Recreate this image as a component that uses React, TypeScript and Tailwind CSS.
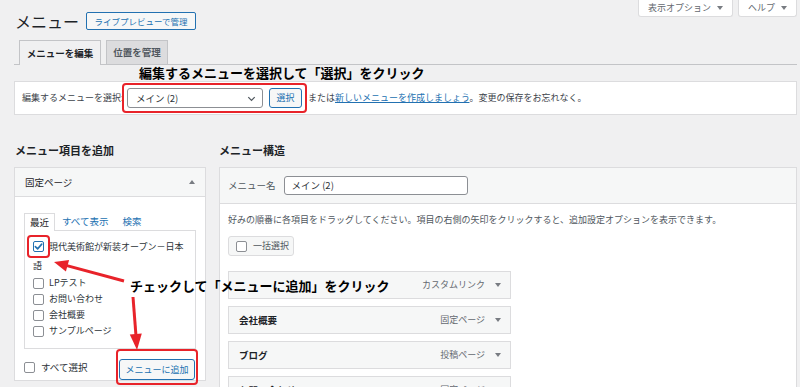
import React from "react";

const RED = "#e8232a";

function Check({ checked = false }: { checked?: boolean }) {
  return (
    <span
      className={
        "inline-flex items-center justify-center w-[11px] h-[11px] rounded-[2px] border bg-white shrink-0 align-middle " +
        (checked ? "border-[#2271b1]" : "border-[#8c8f94]")
      }
    >
      {checked && (
        <svg width="9" height="9" viewBox="0 0 10 10">
          <path d="M1.5 5.2 L4 7.6 L8.6 2.4" fill="none" stroke="#2271b1" strokeWidth="1.8" strokeLinecap="round" strokeLinejoin="round" />
        </svg>
      )}
    </span>
  );
}

function Tri({ up = false }: { up?: boolean }) {
  return (
    <svg width="6" height="4" viewBox="0 0 6 4" className="shrink-0">
      {up ? <path d="M0 4 L3 0 L6 4 Z" fill="#787c82" /> : <path d="M0 0 L6 0 L3 4 Z" fill="#787c82" />}
    </svg>
  );
}

function MenuItem({ title, type }: { title: string; type: string }) {
  return (
    <div className="h-[28px] border border-[#dcdcde] bg-[#f6f7f7] flex items-center pl-[10px] pr-[9px]">
      <span className="text-[9.5px] font-bold text-[#1d2327] flex-1">{title}</span>
      <span className="text-[9px] text-[#646970] mr-[10px]">{type}</span>
      <Tri />
    </div>
  );
}

export default function App() {
  return (
    <div
      className="relative w-[800px] h-[387px] overflow-hidden bg-[#f0f0f1] text-[#3c434a]"
      style={{ fontFamily: '"Noto Sans CJK JP", "Noto Sans", sans-serif' }}
    >
      {/* header row */}
      <div className="flex justify-between pl-[15px] pr-[3px]">
        <div className="flex items-center gap-[7px] pt-[11px]">
          <h1 className="text-[16px] leading-[20px] font-normal text-[#1d2327]">メニュー</h1>
          <button className="h-[18px] w-[110px] border border-[#2271b1] rounded-[2px] bg-[#f6f7f7] text-[#2271b1] text-[8.5px] leading-none">
            ライブプレビューで管理
          </button>
        </div>
        <div className="flex gap-[5px]">
          <button className="h-[17px] w-[95px] bg-white border border-t-0 border-[#dcdcde] rounded-b-[3px] flex items-center justify-center gap-[6px] text-[9px] text-[#646970]">
            表示オプション <Tri />
          </button>
          <button className="h-[17px] w-[59px] bg-white border border-t-0 border-[#dcdcde] rounded-b-[3px] flex items-center justify-center gap-[6px] text-[9px] text-[#646970]">
            ヘルプ <Tri />
          </button>
        </div>
      </div>

      {/* tabs */}
      <div className="mt-[9px] ml-[14px] mr-[3px] pl-[5px] flex items-end gap-[5px] border-b border-[#c3c4c7]">
        <div className="-mb-px w-[82px] h-[25px] border border-b-0 border-[#c3c4c7] bg-[#f0f0f1] flex items-center justify-center text-[9.5px] font-semibold text-[#1d2327]">
          メニューを編集
        </div>
        <div className="w-[62px] h-[24px] border border-b-0 border-[#c3c4c7] bg-[#dcdcde] flex items-center justify-center text-[9.5px] font-semibold text-[#50575e]">
          位置を管理
        </div>
      </div>

      {/* annotation 1 */}
      <div className="h-[16px] pl-[139px] text-[13px] leading-[16px] font-bold text-black">
        編集するメニューを選択して「選択」をクリック
      </div>

      {/* select bar */}
      <div className="ml-[14px] mr-[3px] h-[34px] bg-white border border-[#dcdcde] flex items-center pl-[7px] text-[9px] text-[#3c434a] whitespace-nowrap">
        <span className="w-[105px]">編集するメニューを選択:</span>
        <div className="relative flex items-center gap-[6px]">
          <div className="w-[136px] h-[20px] border border-[#8c8f94] rounded-[3px] bg-white flex items-center justify-between pl-[8px] pr-[5px] text-[9.5px] text-[#2c3338]">
            <span>メイン (2)</span>
            <svg width="11" height="11" viewBox="0 0 12 12">
              <path d="M2.5 4.5 L6 8 L9.5 4.5" fill="none" stroke="#50575e" strokeWidth="1.4" />
            </svg>
          </div>
          <button className="w-[33px] h-[20px] border border-[#2271b1] rounded-[3px] bg-[#f6f7f7] text-[#2271b1] text-[9px]">選択</button>
          <div className="absolute -inset-[5px] border-2 rounded-[4px]" style={{ borderColor: RED }} />
        </div>
        <span className="ml-[6px]">
          または<span className="text-[#2271b1] underline">新しいメニューを作成しましょう</span>。変更の保存をお忘れなく。
        </span>
      </div>

      {/* columns */}
      <div className="mt-[28px] ml-[14px] mr-[3px] flex gap-[13px]">
        {/* left column */}
        <div className="w-[192px] shrink-0">
          <h2 className="text-[11px] leading-[14px] font-bold text-[#1d2327] pl-[1px] mb-[10px]">メニュー項目を追加</h2>
          <div className="border border-[#dcdcde] bg-white">
            <div className="h-[29px] bg-[#f6f7f7] border-b border-[#dcdcde] flex items-center justify-between pl-[10px] pr-[10px]">
              <span className="text-[9.5px] text-[#1d2327]">固定ページ</span>
              <Tri up />
            </div>
            <div className="pt-[16px] px-[9px]">
              <div className="flex items-end text-[9.5px] h-[17px]">
                <div className="h-[18px] -mb-px px-[5px] border border-b-0 border-[#dcdcde] bg-white flex items-center text-[#1d2327] relative z-10">最近</div>
                <div className="ml-[7px] h-[17px] flex items-center text-[#2271b1]">すべて表示</div>
                <div className="ml-[14px] h-[17px] flex items-center text-[#2271b1]">検索</div>
              </div>
              <div className="border border-[#dcdcde] pt-[6px] pb-[9px] pl-[8px] pr-[8px] text-[9px] text-[#2c3338]">
                <div className="leading-[19px]">
                  <span className="relative inline-flex align-middle mr-[5px] -mt-[2px]">
                    <Check checked />
                    <span className="absolute -inset-[6px] border-2 rounded-[4px]" style={{ borderColor: RED }} />
                  </span>
                  現代美術館が新装オープン－日本語
                </div>
                {["LPテスト", "お問い合わせ", "会社概要", "サンプルページ"].map((t) => (
                  <div key={t} className="h-[16px] flex items-center gap-[5px]">
                    <Check />
                    <span>{t}</span>
                  </div>
                ))}
              </div>
              <div className="mt-[5px] flex items-center justify-between pr-[1px]">
                <div className="flex items-center gap-[6px] text-[9.5px] text-[#2c3338]">
                  <Check />
                  <span>すべて選択</span>
                </div>
                <div className="relative">
                  <button className="w-[76px] h-[21px] border border-[#2271b1] rounded-[3px] bg-[#f6f7f7] text-[#2271b1] text-[9px]">
                    メニューに追加
                  </button>
                  <div className="absolute -inset-x-[3px] -inset-y-[5px] border-2 rounded-[4px]" style={{ borderColor: RED }} />
                </div>
              </div>
            </div>
          </div>
        </div>

        {/* right column */}
        <div className="flex-1">
          <h2 className="text-[11px] leading-[14px] font-bold text-[#1d2327] mb-[10px]">メニュー構造</h2>
          <div className="border border-[#dcdcde] bg-white h-[300px]">
            <div className="h-[36px] bg-[#f6f7f7] border-b border-[#dcdcde] flex items-center pl-[8px] gap-[8px]">
              <span className="text-[9.5px] text-[#50575e]">メニュー名</span>
              <div className="w-[184px] h-[19px] border border-[#8c8f94] rounded-[3px] bg-white flex items-center pl-[7px] text-[9.5px] text-[#2c3338]">
                メイン (2)
              </div>
            </div>
            <div className="pt-[9px] pl-[8px]">
              <p className="text-[9px] leading-[14px] text-[#50575e]">
                好みの順番に各項目をドラッグしてください。項目の右側の矢印をクリックすると、追加設定オプションを表示できます。
              </p>
              <div className="mt-[9px] w-[66px] h-[20px] border border-[#dcdcde] rounded-[3px] bg-[#f6f7f7] flex items-center pl-[7px] gap-[6px] text-[9px] text-[#50575e]">
                <Check />
                <span>一括選択</span>
              </div>
              <div className="mt-[15px] w-[283px] flex flex-col gap-[7px]">
                <MenuItem title="" type="カスタムリンク" />
                <MenuItem title="会社概要" type="固定ページ" />
                <MenuItem title="ブログ" type="投稿ページ" />
                <MenuItem title="お問い合わせ" type="固定ページ" />
              </div>
            </div>
          </div>
        </div>
      </div>

      {/* annotation 2 (overlay) */}
      <div className="absolute left-[130px] top-[278px] text-[13px] leading-[16px] font-bold text-black whitespace-nowrap">
        チェックして「メニューに追加」をクリック
      </div>

      {/* arrows (overlay drawing) */}
      <svg className="absolute inset-0 pointer-events-none" width="800" height="387" viewBox="0 0 800 387">
        <line x1="124" y1="281" x2="66" y2="265.4" stroke={RED} strokeWidth="3" />
        <polygon points="54,262 69.1,259.9 65.9,271.5" fill={RED} />
        <line x1="133" y1="297" x2="136" y2="336" stroke={RED} strokeWidth="3" />
        <polygon points="137,350 141.8,333.6 129.8,334.4" fill={RED} />
      </svg>
    </div>
  );
}
